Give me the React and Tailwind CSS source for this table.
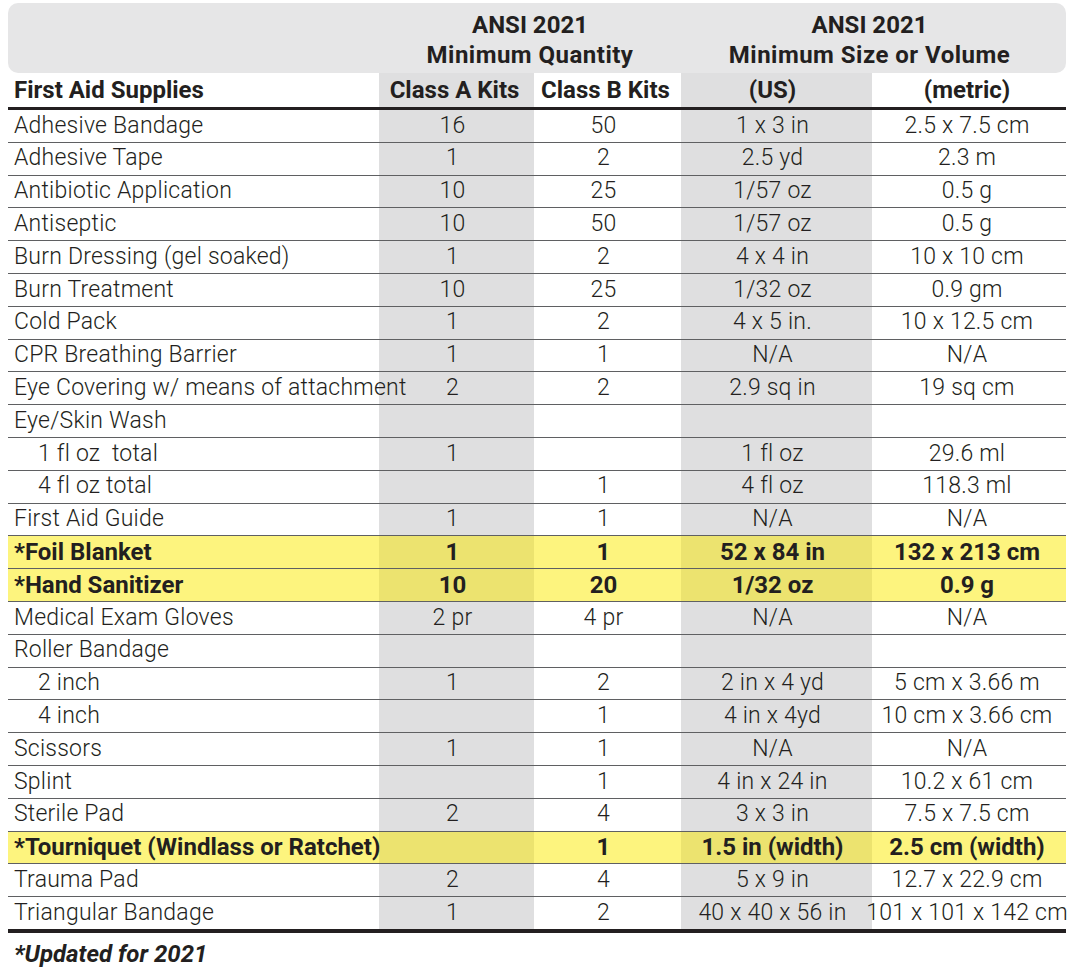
const rows = [
  ["Adhesive Bandage", "16", "50", "1 x 3 in", "2.5 x 7.5 cm"],
  ["Adhesive Tape", "1", "2", "2.5 yd", "2.3 m"],
  ["Antibiotic Application", "10", "25", "1/57 oz", "0.5 g"],
  ["Antiseptic", "10", "50", "1/57 oz", "0.5 g"],
  ["Burn Dressing (gel soaked)", "1", "2", "4 x 4 in", "10 x 10 cm"],
  ["Burn Treatment", "10", "25", "1/32 oz", "0.9 gm"],
  ["Cold Pack", "1", "2", "4 x 5 in.", "10 x 12.5 cm"],
  ["CPR Breathing Barrier", "1", "1", "N/A", "N/A"],
  ["Eye Covering w/ means of attachment", "2", "2", "2.9 sq in", "19 sq cm"],
  ["Eye/Skin Wash", "", "", "", ""],
  ["1 fl oz  total", "1", "", "1 fl oz", "29.6 ml", "indent"],
  ["4 fl oz total", "", "1", "4 fl oz", "118.3 ml", "indent"],
  ["First Aid Guide", "1", "1", "N/A", "N/A"],
  ["*Foil Blanket", "1", "1", "52 x 84 in", "132 x 213 cm", "new"],
  ["*Hand Sanitizer", "10", "20", "1/32 oz", "0.9 g", "new"],
  ["Medical Exam Gloves", "2 pr", "4 pr", "N/A", "N/A"],
  ["Roller Bandage", "", "", "", ""],
  ["2 inch", "1", "2", "2 in x 4 yd", "5 cm x 3.66 m", "indent"],
  ["4 inch", "", "1", "4 in x 4yd", "10 cm x 3.66 cm", "indent"],
  ["Scissors", "1", "1", "N/A", "N/A"],
  ["Splint", "", "1", "4 in x 24 in", "10.2 x 61 cm"],
  ["Sterile Pad", "2", "4", "3 x 3 in", "7.5 x 7.5 cm"],
  ["*Tourniquet (Windlass or Ratchet)", "", "1", "1.5 in (width)", "2.5 cm (width)", "new"],
  ["Trauma Pad", "2", "4", "5 x 9 in", "12.7 x 22.9 cm"],
  ["Triangular Bandage", "1", "2", "40 x 40 x 56 in", "101 x 101 x 142 cm"],
];

function Row({ row, last }) {
  const [name, a, b, us, metric, kind] = row;
  const isNew = kind === "new";
  const rowCls = last
    ? "h-[35.8px] border-b-4 border-[#231f20]"
    : "h-[32.8px] border-b border-[#5f6062]";
  const shade = isNew ? "bg-[#ece36f]" : "bg-[#dfdfe0]";

  return (
    <div
      className={`flex ${rowCls} ${isNew ? "bg-[#fdf47e] text-[24px] font-bold" : "font-light tracking-[0.01em]"}`}
    >
      {/* long labels run over the Class A column, as in the print */}
      <div
        className={`relative z-10 flex w-[371px] items-center whitespace-pre ${kind === "indent" ? "pl-[30px]" : "pl-[6px]"}`}
      >
        {name}
      </div>
      <div className={`flex w-[155px] items-center justify-center pr-2 ${shade}`}>{a}</div>
      <div className="flex w-[147px] items-center justify-center pr-2">{b}</div>
      <div className={`flex w-[191px] items-center justify-center pr-2 ${shade}`}>{us}</div>
      <div className="flex w-[194px] items-center justify-center whitespace-nowrap pr-1">
        {metric}
      </div>
    </div>
  );
}

export default function App() {
  return (
    <div className="h-[972px] w-[1075px] bg-white font-['Roboto',sans-serif] text-[23px] text-[#231f20]">
      <div className="w-[1066px] pl-2 pt-[3px]">
        <div className="flex h-[70px] rounded-[10px] bg-[#e6e6e7] text-[24px] font-bold leading-[30px]">
          <div className="w-[371px]" />
          <div className="flex w-[302px] flex-col items-center justify-center pt-1">
            <span>ANSI 2021</span>
            <span className="tracking-[0.02em]">Minimum Quantity</span>
          </div>
          <div className="flex w-[385px] flex-col items-center justify-center pt-1 pr-2">
            <span>ANSI 2021</span>
            <span className="tracking-[0.02em]">Minimum Size or Volume</span>
          </div>
        </div>

        <div className="flex h-[37px] border-b-[3px] border-[#231f20] text-[24px] font-bold">
          <div className="flex w-[371px] items-center pl-[6px]">First Aid Supplies</div>
          <div className="flex w-[155px] items-center justify-center bg-[#dfdfe0] pr-1">
            Class A Kits
          </div>
          <div className="flex w-[147px] items-center justify-center pr-1">Class B Kits</div>
          <div className="flex w-[191px] items-center justify-center bg-[#dfdfe0] pr-2">
            (US)
          </div>
          <div className="flex w-[194px] items-center justify-center pr-1">(metric)</div>
        </div>

        {rows.map((row, i) => (
          <Row key={i} row={row} last={i === rows.length - 1} />
        ))}

        <p className="pl-[6px] pt-[3px] text-[24px] font-bold italic">*Updated for 2021</p>
      </div>
    </div>
  );
}
